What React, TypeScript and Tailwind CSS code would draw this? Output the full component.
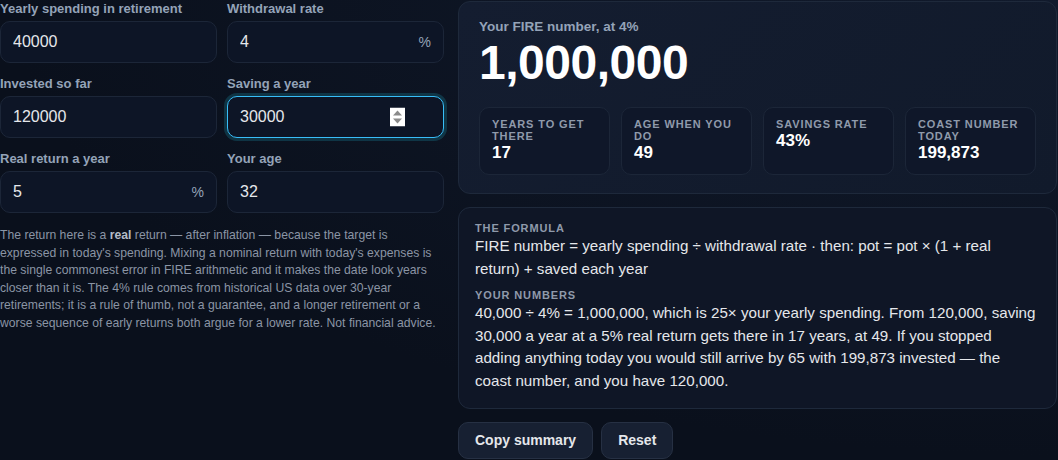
import { useState } from "react";

type Field = {
  id: string;
  label: string;
  value: string;
  suffix?: string;
  focused?: boolean;
};

const FIELDS: Field[] = [
  { id: "spend", label: "Yearly spending in retirement", value: "40000" },
  { id: "rate", label: "Withdrawal rate", value: "4", suffix: "%" },
  { id: "invested", label: "Invested so far", value: "120000" },
  { id: "saving", label: "Saving a year", value: "30000", focused: true },
  { id: "return", label: "Real return a year", value: "5", suffix: "%" },
  { id: "age", label: "Your age", value: "32" },
];

const STATS: [string, string][] = [
  ["Years to get there", "17"],
  ["Age when you do", "49"],
  ["Savings rate", "43%"],
  ["Coast number today", "199,873"],
];

function Spinner() {
  return (
    <svg width="15" height="19" viewBox="0 0 15 19" className="absolute right-[38px] top-1/2 -translate-y-1/2">
      <rect width="15" height="19" fill="#ffffff" />
      <path d="M7.5 3 L12 8 L3 8 Z" fill="#8a8a8a" />
      <path d="M7.5 16 L12 11 L3 11 Z" fill="#8a8a8a" />
    </svg>
  );
}

function Input({ field }: { field: Field }) {
  const [v, setV] = useState(field.value);
  return (
    <label className="flex flex-col gap-1">
      <span className="text-[13px] font-bold leading-[17px] text-[#94a3b8]">{field.label}</span>
      <div
        className={
          "relative flex h-[42px] items-center rounded-[10px] border bg-[#0d1526] px-3 " +
          (field.focused
            ? "border-[#38bdf8] shadow-[0_0_0_3px_rgba(34,211,238,0.18)]"
            : "border-[#1c2638]")
        }
      >
        <input
          value={v}
          onChange={(e) => setV(e.target.value)}
          className="w-full bg-transparent text-[16px] text-[#e5e7eb] outline-none"
        />
        {field.suffix && <span className="text-[14px] text-[#94a3b8]">{field.suffix}</span>}
        {field.focused && <Spinner />}
      </div>
    </label>
  );
}

export default function App() {
  return (
    <div
      className="min-h-[460px] bg-[radial-gradient(ellipse_at_top_right,#111a2c,#0a101c_70%)] text-[#e5e7eb]"
      style={{ fontFamily: '"Liberation Sans", Arial, sans-serif' }}
    >
      <div className="grid grid-cols-[444px_1fr] gap-[14px]">
        <div>
          <div className="grid grid-cols-2 gap-x-[10px] gap-y-3">
            {FIELDS.map((f) => (
              <Input key={f.id} field={f} />
            ))}
          </div>
          <p className="mt-[14px] text-[12.2px] leading-[17.6px] text-[#8b95a5]">
            The return here is a <b className="text-[#b4bcc8]">real</b> return — after inflation — because the target is
            expressed in today's spending. Mixing a nominal return with today's expenses is the single commonest error
            in FIRE arithmetic and it makes the date look years closer than it is. The 4% rule comes from historical US
            data over 30-year retirements; it is a rule of thumb, not a guarantee, and a longer retirement or a worse
            sequence of early returns both argue for a lower rate. Not financial advice.
          </p>
        </div>

        <div className="mt-px mr-px flex flex-col gap-[13px]">
          <section className="rounded-[12px] border border-[#1e293b] bg-[linear-gradient(135deg,#141d30,#111a2b)] px-5 pt-4 pb-[18px]">
            <div className="text-[13.5px] font-bold leading-[18px] text-[#94a3b8]">Your FIRE number, at 4%</div>
            <div className="mt-[3px] text-[48px] font-bold leading-[48px] tracking-[-0.01em] text-white">1,000,000</div>
            <div className="mt-[20px] grid grid-cols-4 gap-[11px]">
              {STATS.map(([label, value]) => (
                <div key={label} className="rounded-[10px] border border-[#1c2638] bg-[#0f1729] px-3 pt-[10px] pb-[11px]">
                  <div className="text-[11px] font-bold uppercase leading-[12px] tracking-[0.08em] text-[#8f9aab]">
                    {label}
                  </div>
                  <div className="text-[17px] font-bold leading-[21px] text-white">{value}</div>
                </div>
              ))}
            </div>
          </section>

          <section className="rounded-[12px] border border-[#1e293b] bg-[#0f1626] px-4 pt-[14px] pb-[15px]">
            <h4 className="text-[11px] font-bold uppercase leading-[13px] tracking-[0.08em] text-[#8f9aab]">
              The formula
            </h4>
            <p className="max-w-[556px] text-[15.15px] leading-[22.6px] text-[#e5e7eb]">
              FIRE number = yearly spending ÷ withdrawal rate · then: pot = pot × (1 + real return) + saved each year
            </p>
            <h4 className="mt-[9px] text-[11px] font-bold uppercase leading-[13px] tracking-[0.08em] text-[#8f9aab]">
              Your numbers
            </h4>
            <p className="text-[15.15px] leading-[22.6px] text-[#e5e7eb]">
              40,000 ÷ 4% = 1,000,000, which is 25× your yearly spending. From 120,000, saving 30,000 a year at a 5% real
              return gets there in 17 years, at 49. If you stopped adding anything today you would still arrive by 65
              with 199,873 invested — the coast number, and you have 120,000.
            </p>
          </section>

          <div className="flex gap-2">
            <button className="h-[37px] rounded-[10px] border border-[#263043] bg-[#172032] px-4 text-[14px] font-bold text-[#e5e7eb]">
              Copy summary
            </button>
            <button className="h-[37px] rounded-[10px] border border-[#263043] bg-[#172032] px-4 text-[14px] font-bold text-[#e5e7eb]">
              Reset
            </button>
          </div>
        </div>
      </div>
    </div>
  );
}
